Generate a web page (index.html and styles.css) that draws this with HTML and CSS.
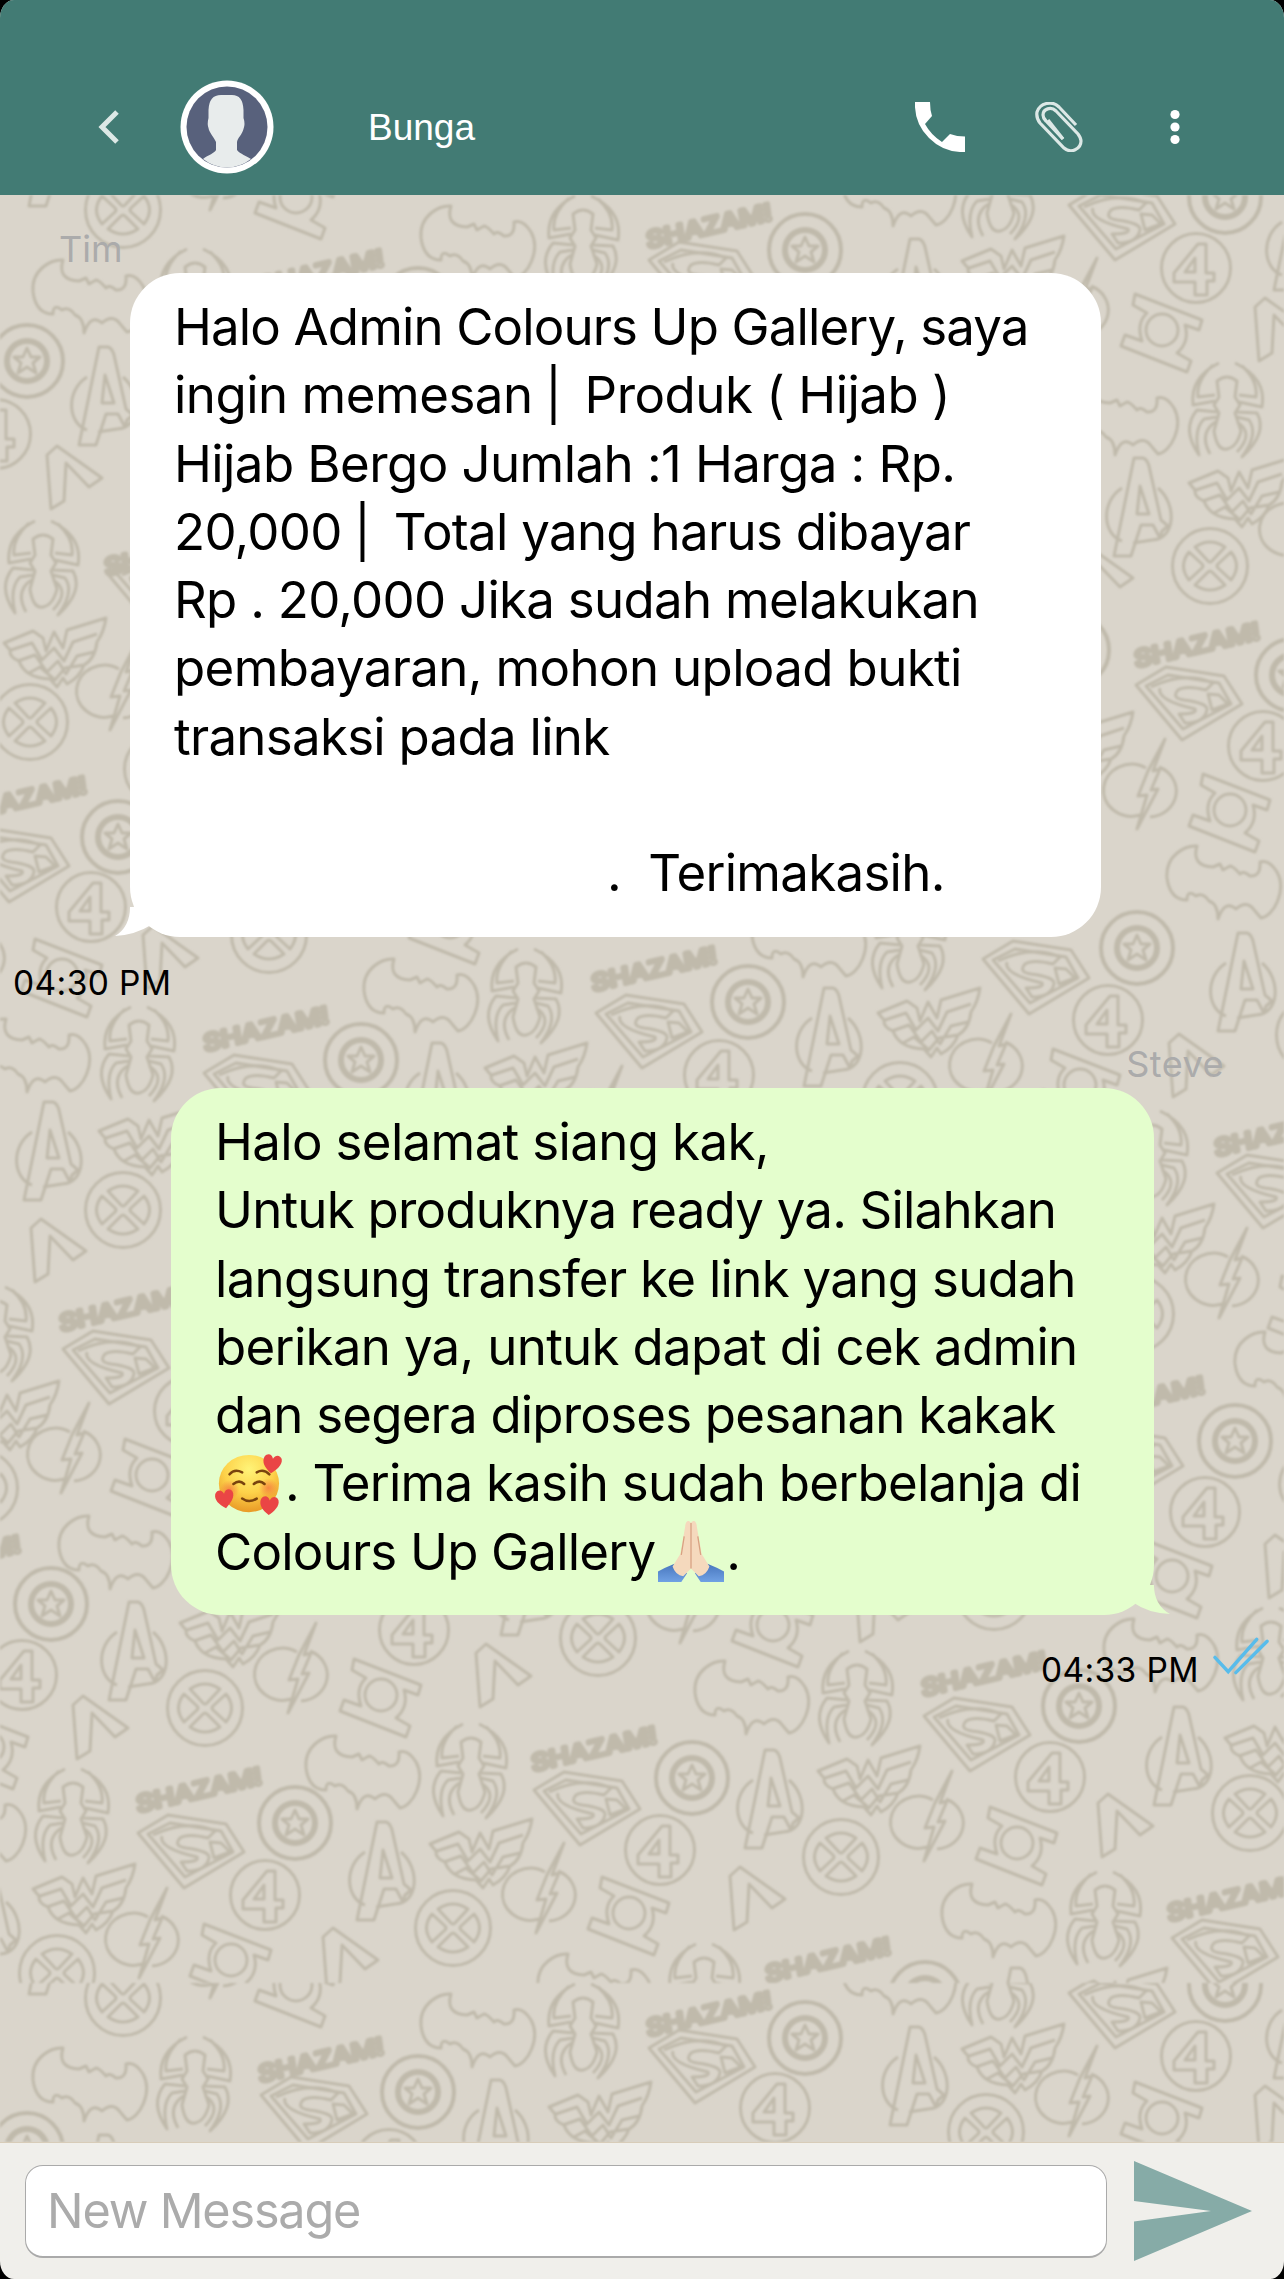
FILE: index.html
```html
<!DOCTYPE html>
<html lang="id">
<head>
<meta charset="utf-8">
<title>Bunga</title>
<link rel="stylesheet" href="styles.css">
</head>
<body>
<div class="phone">
  <header class="topbar">
    <svg class="back" viewBox="0 0 24 40"><path d="M20 5 5 20 20 35"/></svg>
    <svg class="avatar" viewBox="0 0 94 94">
      <circle cx="47" cy="47" r="46.5" fill="#fff"/>
      <circle cx="47" cy="47" r="40.5" fill="#58617c"/>
      <path d="M23 79C28 75 35 73 36 70V62C33 56 29 52 28.500 48Q27 44 28.500 38V30Q29 15 41 15H52Q63 15 63.500 30V38Q65.500 44 63.500 49C62 55 58 57 57 62V70C60 74 67 76 71 79Q60 87.500 47 87.500T23 79Z" fill="#e8ecec"/>
    </svg>
    <h1 class="contact">Bunga</h1>
    <svg class="phone-icon" viewBox="0 0 50 50"><path d="M0 0H15Q15 8 17 14L10 22Q16 33 27 40L35 32Q42 34.500 50 34.500V50Q29 51 14 36Q-1 21 0 0Z"/></svg>
    <svg class="clip" viewBox="0 0 48 50"><path d="M41 23 24 5C17-2 5 1 2 10Q1 16 5 21L29 46C36 52 46 47 46 39Q46 36 43 32L21 9C16 4 8 7 8 13Q8 16 11 19L28 37"/><path d="M28 37 13 18"/></svg>
    <svg class="dots" viewBox="0 0 12 36"><circle cx="6" cy="5.500" r="4.600"/><circle cx="6" cy="18" r="4.600"/><circle cx="6" cy="30.500" r="4.600"/></svg>
  </header>

  <main class="chat">
    <svg class="wallpaper" viewBox="0 195 1284 1947" aria-hidden="true">
      <defs>
        <g id="shield"><circle r="36" stroke-width="4"/><circle r="20" stroke-width="6"/><path d="M0-13 4-4 13-4 6 2 9 12 0 6-9 12-6 2-13-4-4-4Z"/></g>
        <g id="four"><circle r="34.500"/><path d="M4-24H10V5H18V13H11V27H-1V14H-22V5L2-24ZM-1-10-11 4H-1Z"/></g>
        <g id="mutant"><circle r="37.500"/><path d="M-15-19Q0-29 15-19L2-5Q0-3-2-5ZM-15 19Q0 29 15 19L2 6Q0 4-2 6ZM-21-14Q-32 0-21 14L-8 2Q-6 0-8-2ZM21-14Q32 0 21 14L8 2Q6 0 8-2Z"/></g>
        <g id="avenger"><path d="M-18-20C-40-6-37 27-18 33M18-20C37-4 36 31 12 32L-7 35M-6-50H3Q7-49 9-42L21 12 28 18 22 23 20 30 13 17H1L-9 48H-26ZM0-22-3 6H9Z"/></g>
        <g id="spider"><path d="M-10-28Q0-36 10-28L8-12 13-4 8 4 14 22Q10 38 0 40T-13 22L-8 4-13-4-8-12ZM-8-46Q-37-32-34-4L-12-8M-14-44Q-31-28-29-12L-12-14M8-46Q40-31 35-2L12-7M15-43Q31-29 29-12L12-14M-10 3-30 1Q-46 20-28 46Q-34 21-23 10L-10 8M-10 12Q-29 23-17 45M10 3 30 4Q41 24 15 48Q32 25 22 11L10 8M10 13Q28 24 10 43"/></g>
        <g id="bat"><path d="M-26-34C-37-35-58-25-56-2Q-53 20-36 20Q-36 9-27 16Q-20 12-14 21Q-5 24-5 39Q2 19 13 29Q24 19 32 31L38 38C51 36 64 10 54-8Q46-21 37-18Q38-3 27-4Q20-10 17-6Q10-14 7-14L0-10-3-16-10-13Q-32-14-26-34Z"/></g>
        <g id="kryptonian"><path d="M-52-17-22-35 36-26 54 2-6 38ZM-42-16-20-27 31-19 43 2-5 27ZM-37-15Q-3-31 25-19L18-12Q-2-17-10-12-17-4-4-2 20 1 19 8 16 21-3 21L-9 12Q10 12 7 7-32-2-28-14M20-8 31-7 40 2 24 8Z"/></g>
        <g id="amazon"><path d="M-51-9-22-21-12-14-9-1-1-20 8-4 12-22 51-34Q49-20 42-10 40 7 29 13 25 25 12 32L8 26 2 35-5 27Q-30 26-36 9-46 5-45-2ZM-44-2-23-9-13 8-1-4 9 9 18-10 42-18M-37 9-20 3-8 20 3 9 11 22 22 4 39 0M-26 21-15 15 0 28 10 16 29 13"/></g>
        <g id="flash"><path d="M-4-23A28 26 0 1 0-10 24M9-24A28 26 0 0 1 0 26M15-52-2-20-12 5-3 4-13 38 8-2 1-1 10-22 3-20Z"/></g>
        <g id="lantern"><circle r="16"/><path d="M-27-36-29-25-15-17Q-26-7-20 11L-37 5-41 16 25 42 29 31 15 23Q28 12 23-5L37 0 40-10Z"/></g>
        <g id="boomerang"><path d="M-17-31-27-22-23 32-10 24-8-14 15 10 28 1Z"/></g>
        <g id="shazam"><text transform="rotate(-13) skewX(-4) scale(1 1.450)" x="-64" y="14" textLength="128" lengthAdjust="spacingAndGlyphs">SHAZAM!</text></g>
        <filter id="soft" x="0" y="0" width="100%" height="100%"><feGaussianBlur stdDeviation=".8"/></filter>
        <pattern id="heroes" x="0" y="195" width="1284" height="1788" patternUnits="userSpaceOnUse" viewBox="0 195 1284 1788">
          <g class="doodles">
            <use href="#shield" x="27" y="361"/><use href="#shield" x="805" y="250"/><use href="#shield" x="1225" y="197"/><use href="#shield" x="418" y="304"/><use href="#shield" x="118" y="837"/><use href="#shield" x="361" y="1060"/><use href="#shield" x="748" y="1002"/><use href="#shield" x="1137" y="948"/><use href="#shield" x="1292" y="675"/><use href="#shield" x="1073" y="650"/><use href="#shield" x="1235" y="1441"/><use href="#shield" x="51" y="1604"/><use href="#shield" x="295" y="1823"/><use href="#shield" x="692" y="1778"/><use href="#shield" x="1079" y="1706"/><use href="#shield" x="925" y="1998"/>
            <use href="#four" x="389" y="376"/><use href="#four" x="775" y="320"/><use href="#four" x="1196" y="268"/><use href="#four" x="-4" y="434"/><use href="#four" x="91" y="907"/><use href="#four" x="159" y="769"/><use href="#four" x="1108" y="1020"/><use href="#four" x="719" y="1075"/><use href="#four" x="1263" y="746"/><use href="#four" x="1205" y="1512"/><use href="#four" x="189" y="1411"/><use href="#four" x="22" y="1675"/><use href="#four" x="414" y="1630"/><use href="#four" x="265" y="1895"/><use href="#four" x="1050" y="1777"/><use href="#four" x="660" y="1850"/>
            <use href="#mutant" x="123" y="210"/><use href="#mutant" x="986" y="344"/><use href="#mutant" x="30" y="722"/><use href="#mutant" x="269" y="935"/><use href="#mutant" x="900" y="1100"/><use href="#mutant" x="1314" y="1035"/><use href="#mutant" x="1136" y="1314"/><use href="#mutant" x="1210" y="566"/><use href="#mutant" x="123" y="1210"/><use href="#mutant" x="-20" y="1488"/><use href="#mutant" x="598" y="1638"/><use href="#mutant" x="205" y="1708"/><use href="#mutant" x="57" y="1973"/><use href="#mutant" x="453" y="1928"/><use href="#mutant" x="994" y="1592"/><use href="#mutant" x="841" y="1857"/><use href="#mutant" x="1250" y="1813"/>
            <use href="#avenger" x="55" y="158"/><use href="#avenger" x="497" y="342"/><use href="#avenger" x="916" y="289"/><use href="#avenger" x="105" y="397"/><use href="#avenger" x="1300" y="242"/><use href="#avenger" x="438" y="1093"/><use href="#avenger" x="50" y="1152"/><use href="#avenger" x="830" y="1038"/><use href="#avenger" x="1244" y="983"/><use href="#avenger" x="1313" y="1476"/><use href="#avenger" x="1140" y="508"/><use href="#avenger" x="135" y="1652"/><use href="#avenger" x="383" y="1872"/><use href="#avenger" x="-12" y="1922"/><use href="#avenger" x="527" y="1587"/><use href="#avenger" x="771" y="1800"/><use href="#avenger" x="1180" y="1757"/><use href="#avenger" x="1017" y="2018"/>
            <use href="#spider" x="583" y="242"/><use href="#spider" x="195" y="295"/><use href="#spider" x="1000" y="191"/><use href="#spider" x="43" y="567"/><use href="#spider" x="526" y="995"/><use href="#spider" x="139" y="1053"/><use href="#spider" x="910" y="942"/><use href="#spider" x="1152" y="1157"/><use href="#spider" x="1227" y="409"/><use href="#spider" x="-3" y="1333"/><use href="#spider" x="1271" y="1654"/><use href="#spider" x="471" y="1770"/><use href="#spider" x="73" y="1815"/><use href="#spider" x="857" y="1697"/><use href="#spider" x="1105" y="1918"/><use href="#spider" x="704" y="1990"/>
            <use href="#bat" x="477" y="240"/><use href="#bat" x="89" y="294"/><use href="#bat" x="898" y="187"/><use href="#bat" x="420" y="993"/><use href="#bat" x="32" y="1053"/><use href="#bat" x="808" y="938"/><use href="#bat" x="1120" y="416"/><use href="#bat" x="1223" y="880"/><use href="#bat" x="1291" y="1366"/><use href="#bat" x="115" y="1550"/><use href="#bat" x="1160" y="1653"/><use href="#bat" x="362" y="1770"/><use href="#bat" x="-32" y="1823"/><use href="#bat" x="594" y="1988"/><use href="#bat" x="751" y="1695"/><use href="#bat" x="998" y="1918"/>
            <use href="#kryptonian" x="313" y="324"/><use href="#kryptonian" x="701" y="277"/><use href="#kryptonian" x="1121" y="222"/><use href="#kryptonian" x="159" y="590"/><use href="#kryptonian" x="15" y="864"/><use href="#kryptonian" x="256" y="1090"/><use href="#kryptonian" x="648" y="1030"/><use href="#kryptonian" x="1035" y="976"/><use href="#kryptonian" x="1269" y="1190"/><use href="#kryptonian" x="1129" y="1464"/><use href="#kryptonian" x="1188" y="702"/><use href="#kryptonian" x="115" y="1366"/><use href="#kryptonian" x="190" y="1850"/><use href="#kryptonian" x="586" y="1807"/><use href="#kryptonian" x="976" y="1733"/><use href="#kryptonian" x="1224" y="1955"/>
            <use href="#amazon" x="600" y="328"/><use href="#amazon" x="1013" y="270"/><use href="#amazon" x="55" y="652"/><use href="#amazon" x="536" y="1077"/><use href="#amazon" x="150" y="1140"/><use href="#amazon" x="929" y="1022"/><use href="#amazon" x="1163" y="1238"/><use href="#amazon" x="1240" y="492"/><use href="#amazon" x="1082" y="746"/><use href="#amazon" x="8" y="1415"/><use href="#amazon" x="231" y="1632"/><use href="#amazon" x="84" y="1898"/><use href="#amazon" x="481" y="1853"/><use href="#amazon" x="869" y="1780"/><use href="#amazon" x="1276" y="1747"/><use href="#amazon" x="1116" y="2002"/>
            <use href="#flash" x="223" y="172"/><use href="#flash" x="1082" y="310"/><use href="#flash" x="123" y="692"/><use href="#flash" x="-22" y="958"/><use href="#flash" x="367" y="895"/><use href="#flash" x="607" y="1118"/><use href="#flash" x="996" y="1066"/><use href="#flash" x="1232" y="1280"/><use href="#flash" x="1306" y="530"/><use href="#flash" x="1150" y="791"/><use href="#flash" x="74" y="1455"/><use href="#flash" x="301" y="1675"/><use href="#flash" x="152" y="1940"/><use href="#flash" x="549" y="1895"/><use href="#flash" x="693" y="1605"/><use href="#flash" x="937" y="1823"/>
            <use href="#lantern" x="296" y="197"/><use href="#lantern" x="1162" y="330"/><use href="#lantern" x="62" y="975"/><use href="#lantern" x="450" y="922"/><use href="#lantern" x="1080" y="1085"/><use href="#lantern" x="1309" y="1312"/><use href="#lantern" x="1172" y="1576"/><use href="#lantern" x="1230" y="810"/><use href="#lantern" x="152" y="1475"/><use href="#lantern" x="381" y="1695"/><use href="#lantern" x="-12" y="1747"/><use href="#lantern" x="231" y="1960"/><use href="#lantern" x="629" y="1913"/><use href="#lantern" x="773" y="1625"/><use href="#lantern" x="1017" y="1843"/>
            <use href="#boomerang" x="1282" y="329"/><use href="#boomerang" x="74" y="477"/><use href="#boomerang" x="170" y="957"/><use href="#boomerang" x="1196" y="1065"/><use href="#boomerang" x="1292" y="1566"/><use href="#boomerang" x="1105" y="577"/><use href="#boomerang" x="58" y="1250"/><use href="#boomerang" x="503" y="1675"/><use href="#boomerang" x="100" y="1727"/><use href="#boomerang" x="350" y="1959"/><use href="#boomerang" x="883" y="1610"/><use href="#boomerang" x="1125" y="1825"/><use href="#boomerang" x="757" y="1898"/>
            <use href="#shazam" x="319" y="260"/><use href="#shazam" x="707" y="214"/><use href="#shazam" x="165" y="541"/><use href="#shazam" x="22" y="787"/><use href="#shazam" x="264" y="1017"/><use href="#shazam" x="652" y="957"/><use href="#shazam" x="1275" y="1122"/><use href="#shazam" x="1140" y="1387"/><use href="#shazam" x="1195" y="633"/><use href="#shazam" x="120" y="1297"/><use href="#shazam" x="-44" y="1546"/><use href="#shazam" x="592" y="1737"/><use href="#shazam" x="197" y="1778"/><use href="#shazam" x="982" y="1662"/><use href="#shazam" x="1228" y="1887"/><use href="#shazam" x="826" y="1948"/>
          </g>
        </pattern>
      </defs>
      <rect x="0" y="195" width="1284" height="1947" fill="url(#heroes)" filter="url(#soft)"/>
    </svg>

    <section class="message incoming">
      <div class="sender">Tim</div>
      <div class="bubble">
        <svg class="tail" viewBox="0 0 70 30"><path d="M15 0Q15 20 0 29Q20 28 36 18Q47 28 65 29V0Z"/></svg>
        <p class="line l1">Halo Admin Colours Up Gallery, saya</p>
        <p class="line l2">ingin memesan<span class="bar"> |&nbsp; </span>Produk ( Hijab )</p>
        <p class="line l3">Hijab Bergo Jumlah :1 Harga : Rp.</p>
        <p class="line l4">20,000<span class="bar"> |&nbsp; </span>Total yang harus dibayar</p>
        <p class="line l5">Rp . 20,000 Jika sudah melakukan</p>
        <p class="line l6">pembayaran, mohon upload bukti</p>
        <p class="line l7">transaksi pada link</p>
        <p class="line">&nbsp;</p>
        <p class="line last">.&nbsp; Terimakasih.</p>
      </div>
      <div class="meta"><time>04:30 PM</time></div>
    </section>

    <section class="message outgoing">
      <div class="sender">Steve</div>
      <div class="bubble">
        <svg class="tail" viewBox="0 0 70 30"><path d="M54 0Q54 20 70 29Q48 28 34 18Q21 28 4 29V0Z"/></svg>
        <p class="line m1">Halo selamat siang kak,</p>
        <p class="line m2">Untuk produknya ready ya. Silahkan</p>
        <p class="line m3">langsung transfer ke link yang sudah</p>
        <p class="line m4">berikan ya, untuk dapat di cek admin</p>
        <p class="line m5">dan segera diproses pesanan kakak</p>
        <p class="line m6"><svg class="emoji" viewBox="0 0 68 64" role="img" aria-label="🥰">
          <defs>
            <radialGradient id="face" cx=".5" cy=".25" r=".75"><stop offset="0" stop-color="#fff478"/><stop offset=".55" stop-color="#fdd24a"/><stop offset="1" stop-color="#e99a26"/></radialGradient>
            <radialGradient id="blush"><stop offset="0" stop-color="#f5743f" stop-opacity=".75"/><stop offset="1" stop-color="#f5743f" stop-opacity="0"/></radialGradient>
            <path id="heart" d="M0 10C-7 5-11 0-9-6-6-11-1-9 0-5 2-10 7-10 9-6 11 0 5 6 0 10Z" fill="#ea4545"/>
          </defs>
          <ellipse cx="35" cy="31.500" rx="31" ry="29.500" fill="url(#face)"/>
          <circle cx="15" cy="38" r="10" fill="url(#blush)"/><circle cx="55" cy="36" r="10" fill="url(#blush)"/>
          <g fill="none" stroke="#79430e" stroke-width="2.600" stroke-linecap="round"><path d="M15 22Q20 16 28 20M43 20Q50 16 56 22M19 32Q25 27 30 32M40 32Q46 27 51 32"/><path d="M28 47Q35 52 43 47"/></g>
          <use href="#heart" transform="translate(59 11) rotate(8)"/><use href="#heart" transform="translate(10 47) rotate(-8)"/><use href="#heart" transform="translate(56 54) rotate(4)"/>
        </svg>. Terima kasih sudah berbelanja di</p>
        <p class="line m7">Colours Up Gallery<svg class="emoji hands" viewBox="0 0 68 64" role="img" aria-label="🙏🏻">
          <defs><linearGradient id="cuff" x2="0" y2="1"><stop offset="0" stop-color="#4776bd"/><stop offset="1" stop-color="#70a1e4"/></linearGradient></defs>
          <path d="M0 52Q7 48 17 44L30 54 24 63H0ZM68 52Q61 48 51 44L38 54 44 63H68Z" fill="url(#cuff)"/>
          <path d="M34 2C31-2 28 1 28 6L23 34 15 47Q18 56 26 57L34 49 42 57Q50 56 53 47L45 34 40 6C40 1 37-2 34 2Z" fill="#f5d9bd"/>
          <path d="M34 2V49M27 16 24 35M41 16 44 35" fill="none" stroke="#d8a181" stroke-width="1.300"/>
        </svg>.</p>
      </div>
      <div class="meta"><time>04:33 PM</time><svg class="ticks" viewBox="0 0 60 38"><path d="M2 21 16 36 46 2M24 37 57 4"/></svg></div>
    </section>
  </main>

  <footer class="composer">
    <div class="field">New Message</div>
    <svg class="send" viewBox="0 0 118 100"><path d="M0 0 118 50 0 100V60.500L77 50 0 40Z"/></svg>
  </footer>
</div>
</body>
</html>
```
FILE: styles.css
```css
* { box-sizing: border-box; }

body {
  margin: 0;
  background: #000;
  font-family: Inter, "Liberation Sans", sans-serif;
  color: #000;
}

svg { display: block; flex: none; overflow: visible; }

.phone {
  width: 1284px;
  height: 2279px;
  display: flex;
  flex-direction: column;
  overflow: hidden;
  border-radius: 14px / 18px;
  background: #f0efeb;
}

.topbar {
  height: 195px;
  flex: none;
  display: flex;
  align-items: center;
  padding: 58px 103px 0 97px;
  background: #427b74;
}

.back { width: 24px; height: 40px; margin-right: 59px; fill: none; stroke: #dde8e6; stroke-width: 5; }
.avatar { width: 94px; height: 94px; }
.contact {
  margin: 2px auto 0 94px;
  font: 400 37px/44px "Liberation Sans", sans-serif;
  color: #fff;
}
.phone-icon { width: 50px; height: 50px; margin-right: 70px; fill: #fff; overflow: hidden; }
.clip { width: 48px; height: 50px; margin-right: 86px; fill: none; stroke: #dce8e6; stroke-width: 3.2; overflow: hidden; }
.dots { width: 12px; height: 36px; fill: #fff; }

.chat {
  position: relative;
  flex: none;
  height: 1947px;
  background: #dad5cb;
  overflow: hidden;
}

.wallpaper { position: absolute; inset: 0; width: 1284px; height: 1947px; }
.doodles { fill: none; stroke: #c0baab; stroke-width: 3; stroke-linejoin: round; }
.doodles text { font: 700 37px "Liberation Sans", sans-serif; stroke-width: 1.6; }

.message { position: relative; display: flex; flex-direction: column; }
.sender { height: 48px; font-size: 36px; line-height: 48px; color: #ababab; }
.incoming { padding-top: 30px; }
.incoming .sender { padding-left: 59px; }
.outgoing .sender { align-self: flex-end; padding-right: 60px; letter-spacing: 0.5px; }

.bubble {
  position: relative;
  border-radius: 50px;
  padding: 20px 44px 0;
}
.incoming .bubble { width: 971px; height: 664px; margin-left: 130px; background: #fff; }
.outgoing .bubble { width: 983px; height: 527px; margin-left: 171px; background: #e4fecd; }

.tail { position: absolute; bottom: 0; width: 70px; height: 30px; }
.incoming .tail { left: -15px; fill: #fff; }
.outgoing .tail { right: -16px; fill: #e4fecd; }

.line {
  margin: 0;
  height: 68.3px;
  display: flex;
  align-items: center;
  font-size: 51px;
  line-height: 68.3px;
  letter-spacing: -0.72px;
  white-space: pre;
}
.bar { letter-spacing: -2px; }
.l1 { letter-spacing: -0.87px; }
.l2 { letter-spacing: -0.5px; }
.l3 { letter-spacing: -0.58px; }
.l4 { letter-spacing: -0.7px; }
.l6, .m1 { letter-spacing: -0.65px; }
.m2, .m5, .m7 { letter-spacing: -0.8px; }
.m3, .m4 { letter-spacing: -0.69px; }
.m6 { letter-spacing: -0.75px; }
.last { padding-left: 433px; }

.emoji { width: 66px; height: 64px; margin-right: 4px; }
.hands { margin: 0 2px 0 3px; }

.meta { display: flex; align-items: center; height: 62px; font-size: 33.5px; line-height: 40px; letter-spacing: 0.4px; }
.incoming .meta { height: 103px; padding: 0 0 12px 13px; }
.outgoing .meta { align-self: flex-end; padding-right: 14px; height: 109px; }
.ticks { width: 57px; height: 37px; margin: -28px 0 0 14px; fill: none; stroke: #58bceb; stroke-width: 3.6; stroke-linecap: round; }

.composer {
  height: 137px;
  display: flex;
  align-items: center;
  padding: 0 32px 0 25px;
  gap: 27px;
  border-top: 1px solid #d8ccb8;
}
.field {
  width: 1082px;
  height: 93px;
  padding-left: 21px;
  border: 1.5px solid #aaa;
  border-bottom-width: 2px;
  border-radius: 18px;
  background: #fff;
  color: #ababab;
  font-size: 48.5px;
  line-height: 90px;
  letter-spacing: -1.15px;
}
.send { width: 118px; height: 100px; fill: #86aba7; }
```
